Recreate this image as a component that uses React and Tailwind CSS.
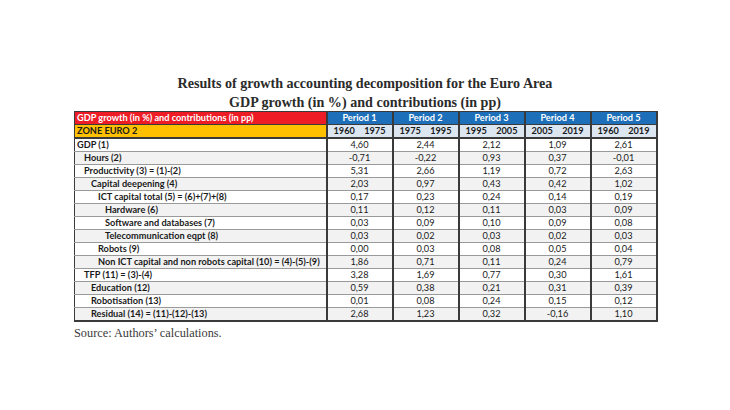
import React from "react";

const periods = [
  { name: "Period 1", from: "1960", to: "1975" },
  { name: "Period 2", from: "1975", to: "1995" },
  { name: "Period 3", from: "1995", to: "2005" },
  { name: "Period 4", from: "2005", to: "2019" },
  { name: "Period 5", from: "1960", to: "2019" },
];

const rows = [
  { label: "GDP (1)", indent: 0, values: ["4,60", "2,44", "2,12", "1,09", "2,61"] },
  { label: "Hours (2)", indent: 1, values: ["-0,71", "-0,22", "0,93", "0,37", "-0,01"] },
  { label: "Productivity (3) = (1)-(2)", indent: 1, values: ["5,31", "2,66", "1,19", "0,72", "2,63"] },
  { label: "Capital deepening (4)", indent: 2, values: ["2,03", "0,97", "0,43", "0,42", "1,02"] },
  { label: "ICT capital total (5) = (6)+(7)+(8)", indent: 3, values: ["0,17", "0,23", "0,24", "0,14", "0,19"] },
  { label: "Hardware (6)", indent: 4, values: ["0,11", "0,12", "0,11", "0,03", "0,09"] },
  { label: "Software and databases (7)", indent: 4, values: ["0,03", "0,09", "0,10", "0,09", "0,08"] },
  { label: "Telecommunication eqpt (8)", indent: 4, values: ["0,03", "0,02", "0,03", "0,02", "0,03"] },
  { label: "Robots (9)", indent: 3, values: ["0,00", "0,03", "0,08", "0,05", "0,04"] },
  { label: "Non ICT capital and non robots capital (10) = (4)-(5)-(9)", indent: 3, values: ["1,86", "0,71", "0,11", "0,24", "0,79"] },
  { label: "TFP (11) = (3)-(4)", indent: 1, values: ["3,28", "1,69", "0,77", "0,30", "1,61"] },
  { label: "Education (12)", indent: 2, values: ["0,59", "0,38", "0,21", "0,31", "0,39"] },
  { label: "Robotisation (13)", indent: 2, values: ["0,01", "0,08", "0,24", "0,15", "0,12"] },
  { label: "Residual (14) = (11)-(12)-(13)", indent: 2, values: ["2,68", "1,23", "0,32", "-0,16", "1,10"] },
];

const indents = ["pl-[2px]", "pl-[9px]", "pl-[16px]", "pl-[23px]", "pl-[30px]"];

export default function App() {
  return (
    <div className="flex h-[410px] w-[730px] flex-col bg-white pt-[74px] pl-[74px]">
      <div className="w-[582px] text-center font-['Liberation_Serif',serif] text-[14.1px] font-bold leading-[19px] text-[#2b2b2b]">
        <p>Results of growth accounting decomposition for the Euro Area</p>
        <p>GDP growth (in %) and contributions (in pp)</p>
      </div>

      <table className="mt-[-1px] w-[582px] table-fixed border-collapse font-['Lato',sans-serif] text-[9.2px] leading-[12px] text-[#1a1a1a]">
        <colgroup>
          <col className="w-[252px]" />
          {periods.map((p) => (
            <col key={p.name} className="w-[66px]" />
          ))}
        </colgroup>
        <thead>
          <tr className="h-[13px]">
            <th className="border border-[#3a3a3a] bg-[#ee1c25] pl-[2px] text-left font-bold text-white">
              GDP growth (in %) and contributions (in pp)
            </th>
            {periods.map((p) => (
              <th
                key={p.name}
                className="border-y border-l-2 border-r-2 border-[#3a3a3a] bg-[#1c6fb8] text-center font-bold text-white"
              >
                {p.name}
              </th>
            ))}
          </tr>
          <tr className="h-[13px]">
            <th className="border border-b-2 border-[#3a3a3a] bg-[#ffc000] pl-[2px] text-left font-bold">ZONE EURO 2</th>
            {periods.map((p) => (
              <th
                key={p.name}
                className="border-x-2 border-y border-b-2 border-[#3a3a3a] bg-[#dce6f1] px-[6px] font-bold"
              >
                <div className="flex justify-between">
                  <span>{p.from}</span>
                  <span>{p.to}</span>
                </div>
              </th>
            ))}
          </tr>
        </thead>
        <tbody>
          {rows.map((r, i) => (
            <tr key={r.label} className={`h-[13px] ${i % 2 === 1 ? "bg-[#f2f2f2]" : "bg-white"}`}>
              <td
                className={`border-y border-l border-r-2 border-y-[#9a9a9a] border-l-[#3a3a3a] border-r-[#3a3a3a] font-bold ${indents[r.indent]} ${
                  i === rows.length - 1 ? "border-b-2 border-b-[#3a3a3a]" : ""
                }`}
              >
                {r.label}
              </td>
              {r.values.map((v, j) => (
                <td
                  key={j}
                  className={`border-x-2 border-y border-x-[#3a3a3a] border-y-[#9a9a9a] text-center ${
                    i === rows.length - 1 ? "border-b-2 border-b-[#3a3a3a]" : ""
                  }`}
                >
                  {v}
                </td>
              ))}
            </tr>
          ))}
        </tbody>
      </table>

      <p className="mt-[2px] font-['Liberation_Serif',serif] text-[12.3px] text-[#3a3a3a]">Source: Authors’ calculations.</p>
    </div>
  );
}
